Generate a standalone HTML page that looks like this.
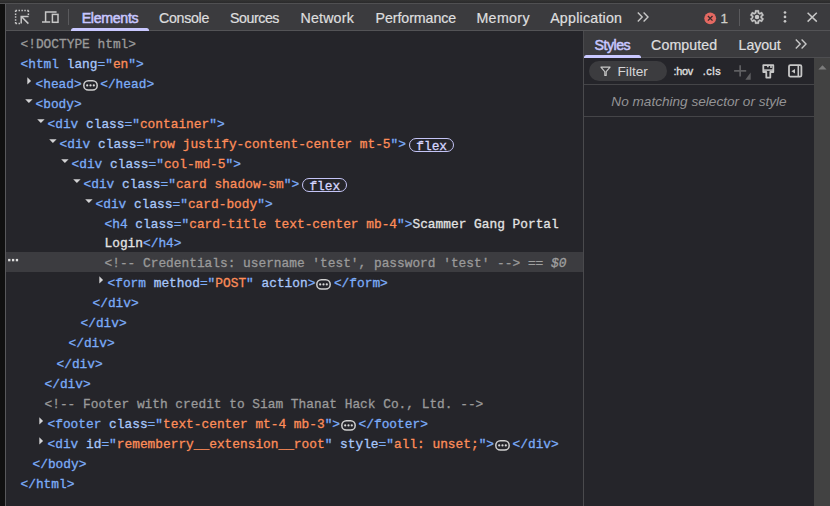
<!DOCTYPE html>
<html><head><meta charset="utf-8">
<style>
html,body{margin:0;padding:0}
body{width:830px;height:506px;overflow:hidden;position:relative;background:#25252a;font-family:"Liberation Sans",sans-serif;}
.abs{position:absolute}
#topstrip{left:0;top:0;width:830px;height:3px;background:linear-gradient(#343434,#2a2a2b)}
#topline{left:0;top:3px;width:830px;height:1px;background:#505052}
#leftstrip{left:0;top:4px;width:5px;height:502px;background:#101010}
#leftline{left:5px;top:4px;width:1px;height:502px;background:#58585b}
#toolbar{left:6px;top:4px;width:824px;height:26px;background:#3b3b3e}
#toolline{left:6px;top:30px;width:824px;height:1px;background:#535356}
.tab{position:absolute;top:4px;height:26px;line-height:28.8px;font-size:14.2px;letter-spacing:-0.27px;color:#dededf;-webkit-text-stroke:0.22px #dededf;white-space:nowrap;transform:translateX(-50%)}
.sel0{color:#c8c7ff;-webkit-text-stroke:0.5px #c8c7ff}
#rpane{left:584px;top:31px;width:246px;height:475px;background:#25252a}
#rline{left:583px;top:31px;width:1px;height:475px;background:#4a4a4d}
#stabs{left:584px;top:31px;width:246px;height:26px;background:#3b3b3e}
#stline{left:584px;top:57px;width:246px;height:1px;background:#4e4e51}
#fline{left:584px;top:84px;width:230px;height:1px;background:#454548}
#nline{left:584px;top:116px;width:230px;height:1px;background:#454548}
#sbar{left:814px;top:58px;width:16px;height:448px;background:#424242}
#hl{left:6px;top:252px;width:577px;height:20px;background:#3c3c40}
.sm{top:58px;height:26px;line-height:26.5px;font-size:10.9px;font-weight:normal;color:#dcdcdc;-webkit-text-stroke:0.4px #dcdcdc}
.r{position:absolute;height:20px;line-height:20px;white-space:pre;font-family:"Liberation Mono",monospace;font-size:12.83px;color:#e3e3e3;-webkit-text-stroke:0.3px}
.ar{position:absolute}
.t{color:#7cacf8}.n{color:#a8c7fa}.v{color:#fe8d59}.x{color:#e3e3e3}.c{color:#9a9a9a}.d{color:#9a9a9a}
.sel{color:#a0a0a0;font-style:italic}
.ell{display:inline-block;vertical-align:middle;width:15px;height:11px;margin:0 2.5px 0 1px;position:relative;top:0.7px}
.ell svg{display:block}
.flex{display:inline-block;vertical-align:middle;box-sizing:border-box;height:14px;line-height:15px;border:1.1px solid #c4c4f6;border-radius:7.2px;padding:0 5.6px 0 6.1px;margin-left:3.2px;font-size:12.83px;color:#d6d6ff;position:relative;top:0.5px}
</style></head>
<body>
<div class="abs" id="topstrip"></div><div class="abs" id="topline"></div>
<div class="abs" id="leftstrip"></div><div class="abs" id="leftline"></div>
<div class="abs" id="toolbar"></div><div class="abs" id="toolline"></div>
<!-- inspect icon -->
<svg class="abs" style="left:14px;top:9px" width="16" height="16" viewBox="0 0 16 16">
 <path d="M1.6 1.5 H14.6 M1.6 1.5 V15" fill="none" stroke="#c7c7c7" stroke-width="1.5" stroke-dasharray="1.5 1.4"/>
 <path d="M14.4 1.5 V6.5 M1.6 14.4 H6.5" fill="none" stroke="#c7c7c7" stroke-width="1.5" stroke-dasharray="1.5 1.4"/>
 <path d="M7.2 14.6 V7.4 H14.6 M7.6 7.8 L14.4 14.6" fill="none" stroke="#c7c7c7" stroke-width="1.5"/>
</svg>
<!-- device icon -->
<svg class="abs" style="left:41px;top:10px" width="19" height="14" viewBox="0 0 19 14">
 <path d="M15.6 1.9 H4.6 V11.4 M1 11.9 H9.2" fill="none" stroke="#c7c7c7" stroke-width="1.5"/>
 <rect x="11.4" y="4.4" width="5.6" height="7.9" fill="none" stroke="#c7c7c7" stroke-width="1.5"/>
</svg>
<div class="abs" style="left:68px;top:9px;width:1px;height:16px;background:#5a5a5d"></div>
<!-- tabs -->
<div class="tab sel0" style="left:110px;letter-spacing:-0.3px">Elements</div>
<div class="abs" style="left:71px;top:28.3px;width:78px;height:2.7px;background:#c9c8ff;border-radius:2.5px 2.5px 0 0"></div>
<div class="tab" style="left:184px;letter-spacing:-0.29px">Console</div>
<div class="tab" style="left:254.5px;letter-spacing:-0.43px">Sources</div>
<div class="tab" style="left:327.2px;letter-spacing:0.21px">Network</div>
<div class="tab" style="left:415.8px;letter-spacing:-0.06px">Performance</div>
<div class="tab" style="left:503.2px;letter-spacing:0.38px">Memory</div>
<div class="tab" style="left:586.2px;letter-spacing:0.24px">Application</div>
<!-- chevrons -->
<svg class="abs" style="left:636px;top:11px" width="14" height="12" viewBox="0 0 14 12">
 <path d="M1.8 1.6 L6.2 6 L1.8 10.4 M7.6 1.6 L12 6 L7.6 10.4" fill="none" stroke="#c7c7c7" stroke-width="1.4"/>
</svg>
<!-- error badge -->
<svg class="abs" style="left:703px;top:11px" width="14" height="14" viewBox="0 0 14 14">
 <circle cx="7.2" cy="7.3" r="5.9" fill="#e46962"/>
 <path d="M4.9 5 L9.5 9.6 M9.5 5 L4.9 9.6" stroke="#3b2b2c" stroke-width="1.3" fill="none"/>
</svg>
<div class="abs" style="left:720.5px;top:4px;height:26px;line-height:29px;font-size:13.4px;color:#cfcfca;-webkit-text-stroke:0.3px #cfcfca">1</div>
<div class="abs" style="left:739px;top:9px;width:1px;height:17px;background:#5a5a5d"></div>
<!-- gear -->
<svg class="abs" style="left:749px;top:9px" width="16" height="16" viewBox="0 0 24 24">
 <path fill="#c7c7c7" stroke="#c7c7c7" stroke-width="0.7" fill-rule="evenodd" d="M9.25 22l-.4-3.2a3.8 3.8 0 0 1-.61-.3 8.3 8.3 0 0 1-.57-.38L4.7 19.38l-2.75-4.75 2.58-1.95A2.4 2.4 0 0 1 4.5 12.34v-.68c0-.1.01-.22.03-.34L1.95 9.38 4.7 4.63l2.97 1.25c.18-.13.38-.26.58-.38.2-.11.4-.21.6-.3L9.25 2h5.5l.4 3.2c.22.08.42.18.61.3.2.12.38.25.57.38l2.97-1.25 2.75 4.75-2.58 1.95c.02.12.03.23.03.34v.66c0 .11-.02.23-.05.35l2.58 1.95-2.75 4.75-2.95-1.25c-.18.13-.38.26-.58.38-.2.11-.4.21-.6.3L14.750 22ZM11 20h1.980l.35-2.650c.52-.13 1-.33 1.440-.58.440-.26.850-.57 1.220-.94l2.480 1.030.97-1.700-2.150-1.630c.08-.23.140-.48.180-.74.030-.26.050-.52.050-.790 0-.27-.02-.53-.05-.79a3.500 3.500 0 0 0-.18-.74l2.150-1.630-.97-1.700-2.480 1.050a5.600 5.600 0 0 0-1.220-.96 5.100 5.100 0 0 0-1.440-.58L13 4h-1.980l-.35 2.650c-.52.130-1 .33-1.440.58-.440.260-.85.570-1.220.94L5.530 7.150l-.97 1.700 2.150 1.600c-.08.250-.14.500-.18.750-.3.250-.5.520-.5.800 0 .27.020.53.050.78.040.25.100.500.180.75l-2.150 1.620.97 1.700 2.480-1.050c.37.380.780.700 1.220.96.440.250.920.450 1.440.580Z"/>
 <circle cx="12" cy="12" r="3.4" fill="#c7c7c7"/>
</svg>
<!-- kebab -->
<svg class="abs" style="left:782px;top:10px" width="6" height="14" viewBox="0 0 6 14">
 <circle cx="3" cy="2.5" r="1.35" fill="#c7c7c7"/><circle cx="3" cy="6.9" r="1.35" fill="#c7c7c7"/><circle cx="3" cy="11.3" r="1.35" fill="#c7c7c7"/>
</svg>
<!-- close -->
<svg class="abs" style="left:806px;top:11px" width="12" height="12" viewBox="0 0 12 12">
 <path d="M1.6 1.8 L10.8 10.6 M10.8 1.8 L1.6 10.6" stroke="#c7c7c7" stroke-width="1.5" fill="none"/>
</svg>

<div class="abs" id="hl"></div>
<svg class="abs" style="left:7px;top:257px" width="13" height="6" viewBox="0 0 13 6"><rect x="1.1" y="1.9" width="2.3" height="2.4" fill="#dedede"/><rect x="4.95" y="1.9" width="2.3" height="2.4" fill="#dedede"/><rect x="8.8" y="1.9" width="2.3" height="2.4" fill="#dedede"/></svg>
<div class="r" style="left:20.5px;top:35.0px"><span class="d">&lt;!DOCTYPE html&gt;</span></div>
<div class="r" style="left:20.5px;top:55.0px"><span class="t">&lt;html <span class="n">lang</span>="<span class="v">en</span>"&gt;</span></div>
<svg class="ar" style="left:26.6px;top:77.1px" width="5" height="8" viewBox="0 0 5 8"><path d="M0.3 0.2 L4.1 3.9 L0.3 7.6 Z" fill="#d2d2d4"/></svg><div class="r" style="left:35.5px;top:75.0px"><span class="t">&lt;head&gt;</span><span class="ell"><svg width="15" height="11" viewBox="0 0 15 11"><rect x="0.8" y="0.8" width="13.4" height="9.2" rx="4.6" fill="none" stroke="#cfcfcf" stroke-width="1.5"/><circle cx="4.2" cy="5.4" r="1.1" fill="#dadada"/><circle cx="7.5" cy="5.4" r="1.1" fill="#dadada"/><circle cx="10.8" cy="5.4" r="1.1" fill="#dadada"/></svg></span><span class="t">&lt;/head&gt;</span></div>
<svg class="ar" style="left:25.4px;top:99.0px" width="8" height="5" viewBox="0 0 8 5"><path d="M0.2 0.3 L7.6 0.3 L3.9 4.1 Z" fill="#d2d2d4"/></svg><div class="r" style="left:35.5px;top:95.0px"><span class="t">&lt;body&gt;</span></div>
<svg class="ar" style="left:37.4px;top:119.0px" width="8" height="5" viewBox="0 0 8 5"><path d="M0.2 0.3 L7.6 0.3 L3.9 4.1 Z" fill="#d2d2d4"/></svg><div class="r" style="left:47.5px;top:115.0px"><span class="t">&lt;div <span class="n">class</span>="<span class="v">container</span>"&gt;</span></div>
<svg class="ar" style="left:49.4px;top:139.0px" width="8" height="5" viewBox="0 0 8 5"><path d="M0.2 0.3 L7.6 0.3 L3.9 4.1 Z" fill="#d2d2d4"/></svg><div class="r" style="left:59.5px;top:135.0px"><span class="t">&lt;div <span class="n">class</span>="<span class="v">row justify-content-center mt-5</span>"&gt;</span><span class="flex">flex</span></div>
<svg class="ar" style="left:61.4px;top:159.0px" width="8" height="5" viewBox="0 0 8 5"><path d="M0.2 0.3 L7.6 0.3 L3.9 4.1 Z" fill="#d2d2d4"/></svg><div class="r" style="left:71.5px;top:155.0px"><span class="t">&lt;div <span class="n">class</span>="<span class="v">col-md-5</span>"&gt;</span></div>
<svg class="ar" style="left:73.4px;top:179.0px" width="8" height="5" viewBox="0 0 8 5"><path d="M0.2 0.3 L7.6 0.3 L3.9 4.1 Z" fill="#d2d2d4"/></svg><div class="r" style="left:83.5px;top:175.0px"><span class="t">&lt;div <span class="n">class</span>="<span class="v">card shadow-sm</span>"&gt;</span><span class="flex">flex</span></div>
<svg class="ar" style="left:85.4px;top:199.0px" width="8" height="5" viewBox="0 0 8 5"><path d="M0.2 0.3 L7.6 0.3 L3.9 4.1 Z" fill="#d2d2d4"/></svg><div class="r" style="left:95.5px;top:195.0px"><span class="t">&lt;div <span class="n">class</span>="<span class="v">card-body</span>"&gt;</span></div>
<div class="r" style="left:104.5px;top:215.0px"><span class="t">&lt;h4 <span class="n">class</span>="<span class="v">card-title text-center mb-4</span>"&gt;</span><span class="x">Scammer Gang Portal</span></div>
<div class="r" style="left:104.5px;top:234.0px"><span class="x">Login</span><span class="t">&lt;/h4&gt;</span></div>
<div class="r" style="left:104.5px;top:254.0px"><span class="c">&lt;!-- Credentials: username 'test', password 'test' --&gt;</span><span class="sel"> == $0</span></div>
<svg class="ar" style="left:98.6px;top:276.1px" width="5" height="8" viewBox="0 0 5 8"><path d="M0.3 0.2 L4.1 3.9 L0.3 7.6 Z" fill="#d2d2d4"/></svg><div class="r" style="left:107.5px;top:274.0px"><span class="t">&lt;form <span class="n">method</span>="<span class="v">POST</span>" <span class="n">action</span>&gt;</span><span class="ell"><svg width="15" height="11" viewBox="0 0 15 11"><rect x="0.8" y="0.8" width="13.4" height="9.2" rx="4.6" fill="none" stroke="#cfcfcf" stroke-width="1.5"/><circle cx="4.2" cy="5.4" r="1.1" fill="#dadada"/><circle cx="7.5" cy="5.4" r="1.1" fill="#dadada"/><circle cx="10.8" cy="5.4" r="1.1" fill="#dadada"/></svg></span><span class="t">&lt;/form&gt;</span></div>
<div class="r" style="left:92.5px;top:294.0px"><span class="t">&lt;/div&gt;</span></div>
<div class="r" style="left:80.5px;top:314.0px"><span class="t">&lt;/div&gt;</span></div>
<div class="r" style="left:68.5px;top:334.0px"><span class="t">&lt;/div&gt;</span></div>
<div class="r" style="left:56.5px;top:355.0px"><span class="t">&lt;/div&gt;</span></div>
<div class="r" style="left:44.5px;top:375.0px"><span class="t">&lt;/div&gt;</span></div>
<div class="r" style="left:44.5px;top:395.0px"><span class="c">&lt;!-- Footer with credit to Siam Thanat Hack Co., Ltd. --&gt;</span></div>
<svg class="ar" style="left:38.6px;top:417.1px" width="5" height="8" viewBox="0 0 5 8"><path d="M0.3 0.2 L4.1 3.9 L0.3 7.6 Z" fill="#d2d2d4"/></svg><div class="r" style="left:47.5px;top:415.0px"><span class="t">&lt;footer <span class="n">class</span>="<span class="v">text-center mt-4 mb-3</span>"&gt;</span><span class="ell"><svg width="15" height="11" viewBox="0 0 15 11"><rect x="0.8" y="0.8" width="13.4" height="9.2" rx="4.6" fill="none" stroke="#cfcfcf" stroke-width="1.5"/><circle cx="4.2" cy="5.4" r="1.1" fill="#dadada"/><circle cx="7.5" cy="5.4" r="1.1" fill="#dadada"/><circle cx="10.8" cy="5.4" r="1.1" fill="#dadada"/></svg></span><span class="t">&lt;/footer&gt;</span></div>
<svg class="ar" style="left:38.6px;top:437.1px" width="5" height="8" viewBox="0 0 5 8"><path d="M0.3 0.2 L4.1 3.9 L0.3 7.6 Z" fill="#d2d2d4"/></svg><div class="r" style="left:47.5px;top:435.0px"><span class="t">&lt;div <span class="n">id</span>="<span class="v">rememberry__extension__root</span>" <span class="n">style</span>="<span class="v">all: unset;</span>"&gt;</span><span class="ell"><svg width="15" height="11" viewBox="0 0 15 11"><rect x="0.8" y="0.8" width="13.4" height="9.2" rx="4.6" fill="none" stroke="#cfcfcf" stroke-width="1.5"/><circle cx="4.2" cy="5.4" r="1.1" fill="#dadada"/><circle cx="7.5" cy="5.4" r="1.1" fill="#dadada"/><circle cx="10.8" cy="5.4" r="1.1" fill="#dadada"/></svg></span><span class="t">&lt;/div&gt;</span></div>
<div class="r" style="left:32.5px;top:455.0px"><span class="t">&lt;/body&gt;</span></div>
<div class="r" style="left:20.5px;top:475.0px"><span class="t">&lt;/html&gt;</span></div>
<div class="abs" id="rpane"></div><div class="abs" id="rline"></div>
<div class="abs" id="stabs"></div><div class="abs" id="stline"></div>
<div class="abs" id="fline"></div><div class="abs" id="nline"></div>
<div class="abs" id="sbar"></div>
<!-- styles tabs -->
<div class="tab sel0" style="left:612.3px;top:31px;letter-spacing:-0.5px">Styles</div>
<div class="abs" style="left:584px;top:55.3px;width:57px;height:2.7px;background:#c9c8ff;border-radius:2.5px 2.5px 0 0"></div>
<div class="tab" style="left:684.2px;top:31px;letter-spacing:0.1px">Computed</div>
<div class="tab" style="left:759.6px;top:31px;letter-spacing:-0.1px">Layout</div>
<svg class="abs" style="left:794px;top:38px" width="14" height="12" viewBox="0 0 14 12">
 <path d="M1.8 1.6 L6.2 6 L1.8 10.4 M7.6 1.6 L12 6 L7.6 10.4" fill="none" stroke="#c7c7c7" stroke-width="1.4"/>
</svg>
<!-- filter row -->
<div class="abs" style="left:589px;top:61px;width:78px;height:20px;border-radius:10px;background:#3c3c3f"></div>
<svg class="abs" style="left:600px;top:66px" width="11" height="10" viewBox="0 0 11 10">
 <path d="M0.9 1.1 H10.1 L6.2 5.6 V9.4 H4.8 V5.6 Z" fill="none" stroke="#c8c8c8" stroke-width="1.1" stroke-linejoin="round"/>
</svg>
<div class="abs" style="left:617.5px;top:58px;height:26px;line-height:27.5px;font-size:13.7px;color:#d6d6d8">Filter</div>
<div class="abs sm" style="left:673.4px;letter-spacing:-0.25px">:hov</div>
<div class="abs sm" style="left:702.8px;letter-spacing:0.55px">.cls</div>
<svg class="abs" style="left:733px;top:64px" width="19" height="17" viewBox="0 0 19 17">
 <path d="M1.1 6.9 H13.2 M7.15 1.2 V12.6" stroke="#5f5f62" stroke-width="1.7" fill="none"/>
 <path d="M17.7 8.6 V15.7 H12.3 Z" fill="#5f5f62"/>
</svg>
<!-- brush -->
<svg class="abs" style="left:761px;top:63px" width="15" height="17" viewBox="0 0 15 17">
 <path d="M2.3 2.2 H12.3 V9 H9.3 V14.6 H5.3 V9 H2.3 Z" fill="none" stroke="#c7c7c7" stroke-width="1.8" stroke-linejoin="round"/>
 <path d="M2.3 7.1 H12.3" stroke="#c7c7c7" stroke-width="1.5" fill="none"/>
 <path d="M6.9 2 V4.3 M10 2 V5" stroke="#c7c7c7" stroke-width="1.6" fill="none"/>
</svg>
<!-- sidebar toggle -->
<svg class="abs" style="left:787px;top:64px" width="16" height="15" viewBox="0 0 16 15">
 <rect x="2" y="1.2" width="12.4" height="11.4" rx="1.4" fill="none" stroke="#c7c7c7" stroke-width="1.8"/>
 <path d="M11.3 1.2 V12.6" stroke="#c7c7c7" stroke-width="1.6"/>
 <path d="M8 4.9 V9.5 L4.4 7.2 Z" fill="#c7c7c7"/>
</svg>
<!-- scrollbar arrow -->
<svg class="abs" style="left:818px;top:65px" width="9" height="5" viewBox="0 0 9 5"><path d="M0.4 4.5 L4.5 0.2 L8.6 4.5 Z" fill="#7c7c7c"/></svg>
<div class="abs" style="left:584px;top:85px;width:230px;height:31px;line-height:34px;text-align:center;font-size:13.6px;font-style:italic;color:#949496;letter-spacing:0px;text-indent:0px">No matching selector or style</div>

</body></html>
